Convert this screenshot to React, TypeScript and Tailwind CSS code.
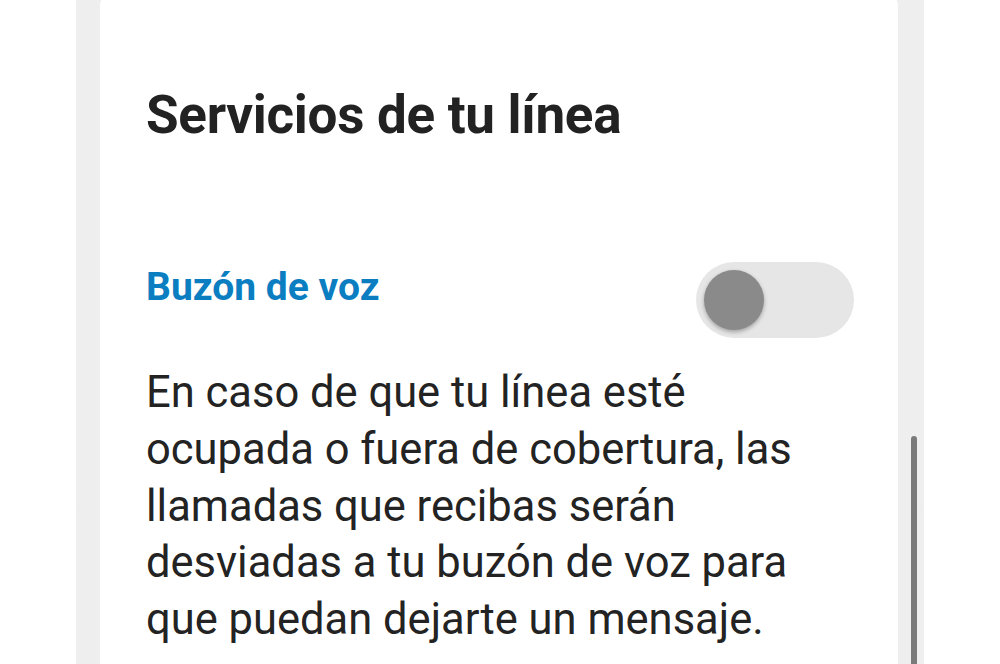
export default function App() {
  return (
    <div
      className="relative w-[1000px] h-[664px] overflow-hidden bg-white"
      style={{ fontFamily: 'Roboto, "Noto Sans", Arial, sans-serif' }}
    >
      {/* page column with soft side shade */}
      <div className="mx-[76px] h-full bg-gradient-to-r from-[#eeeeee] via-[#f5f5f5] to-[#eeeeee] flex">
        <div className="flex-1 ml-[24px] mr-[26px] bg-white rounded-t-[14px] -mt-[8px] pt-[8px]">
          <div className="pl-[46px] pr-[44px]">
            <h1 className="pt-[84px] text-[53px] leading-[62px] font-bold text-[#222222] tracking-[-0.3px]">
              Servicios de tu línea
            </h1>

            {/* Buzón de voz */}
            <div className="mt-[114px] flex items-start justify-between">
              <h2 className="pt-[4px] text-[39px] leading-[46px] font-bold text-[#0b7dc1]">
                Buzón de voz
              </h2>
              <button
                type="button"
                aria-label="Buzón de voz"
                className="mt-[2px] w-[158px] h-[76px] rounded-full bg-[#e6e6e6] flex items-center pl-[8px]"
              >
                <span className="block w-[60px] h-[60px] rounded-full bg-[#8a8a8a] shadow-[0_2px_4px_rgba(0,0,0,0.3)]" />
              </button>
            </div>

            <p className="mt-[27px] text-[43.5px] leading-[56.75px] text-[#232323]">
              En caso de que tu línea esté
              <br />
              ocupada o fuera de cobertura, las
              <br />
              llamadas que recibas serán
              <br />
              desviadas a tu buzón de voz para
              <br />
              que puedan dejarte un mensaje.
            </p>
          </div>
        </div>
      </div>

      {/* scrollbar thumb */}
      <div className="absolute left-[911px] top-[436px] w-[6px] h-[240px] rounded-t-[3px] bg-[#7a7a7a]" />
    </div>
  );
}
